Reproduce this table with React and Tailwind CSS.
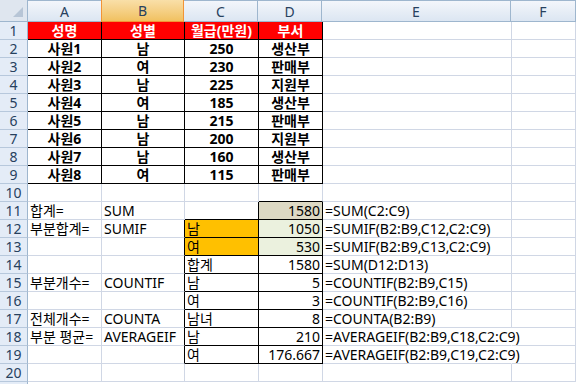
import React from "react";

const FONT = { fontFamily: '"Noto Sans", "Noto Sans CJK KR", sans-serif' };

const cols = [
  { key: "A", w: "w-[74px]" },
  { key: "B", w: "w-[83px]" },
  { key: "C", w: "w-[74px]" },
  { key: "D", w: "w-[64px]" },
  { key: "E", w: "w-[189px]" },
  { key: "F", w: "flex-1" },
];

const data = {
  1: {
    A: { t: "성명", head: true },
    B: { t: "성별", head: true },
    C: { t: "월급(만원)", head: true },
    D: { t: "부서", head: true },
  },
};
const emp = [
  ["사원1", "남", "250", "생산부"],
  ["사원2", "여", "230", "판매부"],
  ["사원3", "남", "225", "지원부"],
  ["사원4", "여", "185", "생산부"],
  ["사원5", "남", "215", "판매부"],
  ["사원6", "남", "200", "지원부"],
  ["사원7", "남", "160", "생산부"],
  ["사원8", "여", "115", "판매부"],
];
emp.forEach((r, i) => {
  data[i + 2] = {
    A: { t: r[0], tbl: true },
    B: { t: r[1], tbl: true },
    C: { t: r[2], tbl: true },
    D: { t: r[3], tbl: true },
  };
});
const lower = [
  [11, "합계=", "SUM", null, "1580", "=SUM(C2:C9)", "tan", null],
  [12, "부분합계=", "SUMIF", "남", "1050", "=SUMIF(B2:B9,C12,C2:C9)", "green", "orange"],
  [13, null, null, "여", "530", "=SUMIF(B2:B9,C13,C2:C9)", "green", "orange"],
  [14, null, null, "합계", "1580", "=SUM(D12:D13)", null, null],
  [15, "부분개수=", "COUNTIF", "남", "5", "=COUNTIF(B2:B9,C15)", null, null],
  [16, null, null, "여", "3", "=COUNTIF(B2:B9,C16)", null, null],
  [17, "전체개수=", "COUNTA", "남녀", "8", "=COUNTA(B2:B9)", null, null],
  [18, "부분 평균=", "AVERAGEIF", "남", "210", "=AVERAGEIF(B2:B9,C18,C2:C9)", null, null],
  [19, null, null, "여", "176.667", "=AVERAGEIF(B2:B9,C19,C2:C9)", null, null],
];
lower.forEach(([r, a, b, c, d, e, dbg, cbg]) => {
  const row = {};
  if (a) row.A = { t: a };
  if (b) row.B = { t: b };
  if (c) row.C = { t: c, box: true, align: "left", bg: cbg };
  row.D = { t: d, box: true, align: "right", bg: dbg };
  row.E = { t: e, noRight: r === 18 || r === 19 };
  data[r] = row;
});

const isBlack = (r, k) => {
  const c = data[r] && data[r][k];
  return !!(c && (c.head || c.tbl || c.box));
};
const nextKey = { A: "B", B: "C", C: "D", D: "E", E: "F", F: null };

function Cell({ r, col }) {
  const c = (data[r] && data[r][col.key]) || null;
  const me = isBlack(r, col.key);
  const nk = nextKey[col.key];
  const rightBlack = me || (nk && isBlack(r, nk));
  const bottomBlack = me || isBlack(r + 1, col.key);
  let cls = `${col.w} h-[18px] shrink-0 border-r border-b flex items-center whitespace-nowrap overflow-visible text-[14px] leading-none`;
  cls += rightBlack ? " border-r-black" : c && c.noRight ? " border-r-white" : " border-r-[#d0d7e5]";
  cls += bottomBlack ? " border-b-black" : " border-b-[#d0d7e5]";
  if (c) {
    if (c.head) cls += " bg-[#ff0000] text-white font-bold justify-center";
    else if (c.tbl) cls += " text-black font-bold justify-center";
    else if (c.align === "right") cls += " justify-end pr-[2px] text-black";
    else cls += " justify-start pl-[2px] text-black";
    if (c.bg === "tan") cls += " bg-[#ddd9c4]";
    if (c.bg === "green") cls += " bg-[#ebf1de]";
    if (c.bg === "orange") cls += " bg-[#ffc000]";
  }
  return (
    <div className={cls}>
      <span>{c ? c.t : ""}</span>
    </div>
  );
}

function RowHeader({ n }) {
  return (
    <div className="w-[28px] h-[18px] shrink-0 bg-[#e4ecf7] border-r border-b border-r-[#9eb6ce] border-b-[#b7c8dc] flex items-center justify-center text-[14px] leading-none text-[#27415e]">
      {n}
    </div>
  );
}

export default function App() {
  const rows = Array.from({ length: 20 }, (_, i) => i + 1);
  return (
    <div className="w-[576px] h-[384px] overflow-hidden bg-white select-none" style={FONT}>
      <div className="flex h-[22px]">
        <div className="w-[28px] h-[22px] shrink-0 bg-[#dfe6ef] border-r border-b border-r-[#9eb6ce] border-b-[#9eb6ce] relative">
          <svg className="absolute left-[13px] top-[7px]" width="10" height="10" viewBox="0 0 10 10">
            <polygon points="10,0 10,10 0,10" fill="#b7c5d6" />
          </svg>
        </div>
        {cols.map((c) =>
          c.key === "B" ? (
            <div
              key={c.key}
              className={`${c.w} h-[22px] shrink-0 border-r border-b border-r-[#f29436] border-b-[#f29436] border-l border-l-[#f29436] -ml-px bg-gradient-to-b from-[#f9dfa8] to-[#f1c15f] flex items-center justify-center text-[14px] text-[#27415e]`}
            >
              {c.key}
            </div>
          ) : (
            <div
              key={c.key}
              className={`${c.w} h-[22px] shrink-0 border-r border-b border-r-[#9eb6ce] border-b-[#9eb6ce] border-t border-t-[#9eb6ce] bg-gradient-to-b from-[#f3f6fb] to-[#dce6f2] flex items-center justify-center text-[14px] text-[#27415e]`}
            >
              {c.key}
            </div>
          )
        )}
      </div>
      {rows.map((r) => (
        <div key={r} className="flex h-[18px]">
          <RowHeader n={r} />
          {cols.map((col) => (
            <Cell key={col.key} r={r} col={col} />
          ))}
        </div>
      ))}
      <div className="flex h-[18px]">
        <div className="w-[28px] h-[18px] shrink-0 bg-[#e4ecf7] border-r border-r-[#9eb6ce]" />
        <div className="flex-1" />
      </div>
    </div>
  );
}
